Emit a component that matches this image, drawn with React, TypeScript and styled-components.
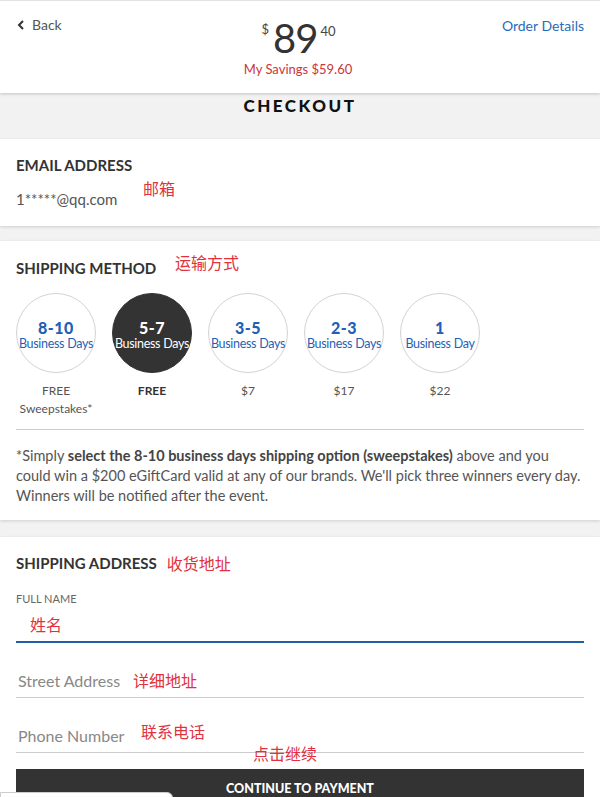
import { FC } from "react";
import styled, { createGlobalStyle } from "styled-components";

const GlobalStyle = createGlobalStyle`
  html, body {
    margin: 0;
    padding: 0;
    background: #f2f2f2;
  }
  body {
    font-family: Lato, "Noto Sans CJK SC", sans-serif;
    color: #333;
  }
  * {
    box-sizing: border-box;
  }
`;

interface ShippingOption {
  range: string;
  unit: string;
  price: string;
  note?: string;
  selected?: boolean;
}

const options: ShippingOption[] = [
  { range: "8-10", unit: "Business Days", price: "FREE", note: "Sweepstakes*" },
  { range: "5-7", unit: "Business Days", price: "FREE", selected: true },
  { range: "3-5", unit: "Business Days", price: "$7" },
  { range: "2-3", unit: "Business Days", price: "$17" },
  { range: "1", unit: "Business Day", price: "$22" },
];

const App: FC = () => {
  return (
    <Page>
      <GlobalStyle />
      <Header>
        <BackLink>
          <svg width="10" height="10" viewBox="0 0 10 10">
            <path
              d="M7 1 L3 5 L7 9"
              fill="none"
              stroke="#333"
              strokeWidth="2"
            />
          </svg>
          Back
        </BackLink>
        <PriceBlock>
          <Price>
            <PriceSmall>$</PriceSmall>
            <PriceMain>89</PriceMain>
            <PriceSmall $cents>40</PriceSmall>
          </Price>
          <Savings>My Savings $59.60</Savings>
        </PriceBlock>
        <OrderLink>Order Details</OrderLink>
      </Header>

      <CheckoutBar>CHECKOUT</CheckoutBar>

      <Section $bottom={17}>
        <Heading>EMAIL ADDRESS</Heading>
        <EmailValue>1*****@qq.com</EmailValue>
        <Note $top={39} $left={143}>邮箱</Note>
      </Section>

      <Section $gap={15} $top={17} $bottom={14}>
        <Heading>SHIPPING METHOD</Heading>
        <Note $top={11} $left={175}>运输方式</Note>
        <Options>
          {options.map((o) => (
            <Option key={o.range}>
              <Circle $selected={o.selected}>
                <Range>{o.range}</Range>
                <Unit>{o.unit}</Unit>
              </Circle>
              <OptionPrice $selected={o.selected}>
                {o.price}
                {o.note && <br />}
                {o.note}
              </OptionPrice>
            </Option>
          ))}
        </Options>
        <Divider />
        <Terms>
          *Simply <b>select the 8-10 business days shipping option (sweepstakes)</b>{" "}
          above and you could win a $200 eGiftCard valid at any of our brands.
          We'll pick three winners every day. Winners will be notified after the
          event.
        </Terms>
      </Section>

      <Section $gap={17} $bottom={0}>
        <Heading>
          SHIPPING ADDRESS<InlineNote>收货地址</InlineNote>
        </Heading>
        <Field $first>
          <FieldLabel>FULL NAME</FieldLabel>
          <Input $active />
          <Note $top={22} $left={14}>姓名</Note>
        </Field>
        <Field>
          <Input placeholder="Street Address" />
          <Note $top={13} $left={117}>详细地址</Note>
        </Field>
        <Field>
          <Input placeholder="Phone Number" />
          <Note $top={9} $left={125}>联系电话</Note>
        </Field>
        <ButtonWrap>
          <Note $top={-26} $left={237}>点击继续</Note>
          <PayButton>CONTINUE TO PAYMENT</PayButton>
          <Popup />
        </ButtonWrap>
      </Section>
    </Page>
  );
};

export default App;

const Page = styled.div`
  width: 600px;
  height: 797px;
  overflow: hidden;
  background: #f2f2f2;
  border-top: 1px solid #e3e3e3;
`;

const Header = styled.header`
  display: grid;
  grid-template-columns: 1fr auto 1fr;
  align-items: start;
  height: 92px;
  padding: 14px 16px 0;
  background: #fff;
  box-shadow: 0 1px 3px rgba(0, 0, 0, 0.2);
  position: relative;
  z-index: 1;
`;

const BackLink = styled.div`
  display: flex;
  align-items: center;
  gap: 6px;
  font-size: 14px;
  color: #555;
  line-height: 20px;
`;

const PriceBlock = styled.div`
  display: flex;
  flex-direction: column;
  align-items: center;
  padding-right: 4px;
`;

const Price = styled.div`
  display: flex;
  align-items: flex-start;
  color: #333;
  height: 46px;
`;

const PriceSmall = styled.span<{ $cents?: boolean }>`
  font-size: 13px;
  line-height: 13px;
  color: #444;
  margin-top: ${(p) => (p.$cents ? 10 : 8)}px;
  padding: 0 ${(p) => (p.$cents ? 3 : 4)}px;
`;

const PriceMain = styled.span`
  font-size: 40px;
  line-height: 46px;
  font-weight: 400;
  letter-spacing: -1px;
`;

const Savings = styled.div`
  font-size: 13px;
  color: #c9353d;
  line-height: 16px;
`;

const OrderLink = styled.div`
  justify-self: end;
  font-size: 14px;
  line-height: 22px;
  color: #2b6cb8;
`;

const CheckoutBar = styled.div`
  height: 46px;
  padding-top: 3px;
  text-align: center;
  font-size: 17px;
  font-weight: 900;
  letter-spacing: 2.5px;
  color: #111;
  line-height: 20px;
`;

const Section = styled.section<{ $gap?: number; $top?: number; $bottom?: number }>`
  position: relative;
  margin-top: ${(p) => p.$gap ?? 0}px;
  padding: ${(p) => p.$top ?? 16}px 16px ${(p) => p.$bottom ?? 16}px;
  background: #fff;
  box-shadow: 0 1px 3px rgba(0, 0, 0, 0.15);
`;

const Heading = styled.h2`
  margin: 0;
  font-size: 15px;
  line-height: 20px;
  font-weight: 700;
  color: #333;
  display: flex;
  align-items: center;
`;

const EmailValue = styled.div`
  margin-top: 14px;
  font-size: 15px;
  line-height: 20px;
  color: #555;
`;

const Note = styled.span<{ $top: number; $left: number }>`
  position: absolute;
  top: ${(p) => p.$top}px;
  left: ${(p) => p.$left}px;
  font-family: "Noto Sans CJK SC", sans-serif;
  font-size: 16px;
  line-height: 20px;
  color: #e0313c;
  white-space: nowrap;
  z-index: 2;
`;

const InlineNote = styled.span`
  margin-left: 10px;
  font-family: "Noto Sans CJK SC", sans-serif;
  font-size: 16px;
  font-weight: 400;
  color: #e0313c;
`;

const Options = styled.div`
  display: flex;
  gap: 16px;
  margin-top: 15px;
`;

const Option = styled.div`
  width: 80px;
  display: flex;
  flex-direction: column;
  align-items: center;
`;

const Circle = styled.div<{ $selected?: boolean }>`
  width: 80px;
  height: 80px;
  border-radius: 50%;
  border: 1px solid ${(p) => (p.$selected ? "#333" : "#d3d3d3")};
  background: ${(p) => (p.$selected ? "#333" : "#fff")};
  color: ${(p) => (p.$selected ? "#fff" : "#1f5fb5")};
  display: flex;
  flex-direction: column;
  align-items: center;
  justify-content: center;
  padding-top: 3px;
`;

const Range = styled.div`
  font-size: 16px;
  font-weight: 900;
  line-height: 17px;
  letter-spacing: 0.5px;
`;

const Unit = styled.div`
  font-size: 12.5px;
  line-height: 15px;
  white-space: nowrap;
  letter-spacing: -0.3px;
`;

const OptionPrice = styled.div<{ $selected?: boolean }>`
  margin-top: 9px;
  font-size: 12px;
  line-height: 18px;
  text-align: center;
  color: ${(p) => (p.$selected ? "#333" : "#555")};
  font-weight: ${(p) => (p.$selected ? 700 : 400)};
`;

const Divider = styled.hr`
  margin: 11px 0 16px;
  border: none;
  border-top: 1px solid #ccc;
`;

const Terms = styled.p`
  margin: 0;
  font-size: 14.5px;
  line-height: 20px;
  color: #555;
  b {
    color: #444;
  }
`;

const Field = styled.div<{ $first?: boolean }>`
  position: relative;
  margin-top: ${(p) => (p.$first ? 19 : 14)}px;
`;

const FieldLabel = styled.div`
  font-size: 11px;
  line-height: 14px;
  color: #666;
`;

const Input = styled.input<{ $active?: boolean }>`
  display: block;
  width: 100%;
  height: ${(p) => (p.$active ? 37 : 41)}px;
  padding: ${(p) => (p.$active ? 8 : 6)}px 2px 0;
  border: none;
  border-bottom: ${(p) => (p.$active ? "2px solid #1f5fa8" : "1px solid #ccc")};
  outline: none;
  background: transparent;
  font-family: Lato, sans-serif;
  font-size: 16px;
  color: #333;
  &::placeholder {
    color: #888;
  }
`;

const ButtonWrap = styled.div`
  position: relative;
  margin-top: 16px;
`;

const PayButton = styled.button`
  display: block;
  width: 100%;
  height: 42px;
  border: none;
  background: #333;
  color: #fff;
  font-family: Lato, sans-serif;
  font-size: 12.5px;
  font-weight: 900;
  padding-bottom: 4px;
`;

const Popup = styled.div`
  position: absolute;
  left: -16px;
  top: 23px;
  width: 173px;
  height: 20px;
  background: #fff;
  border: 1px solid #ccc;
  border-radius: 0 6px 0 0;
`;
